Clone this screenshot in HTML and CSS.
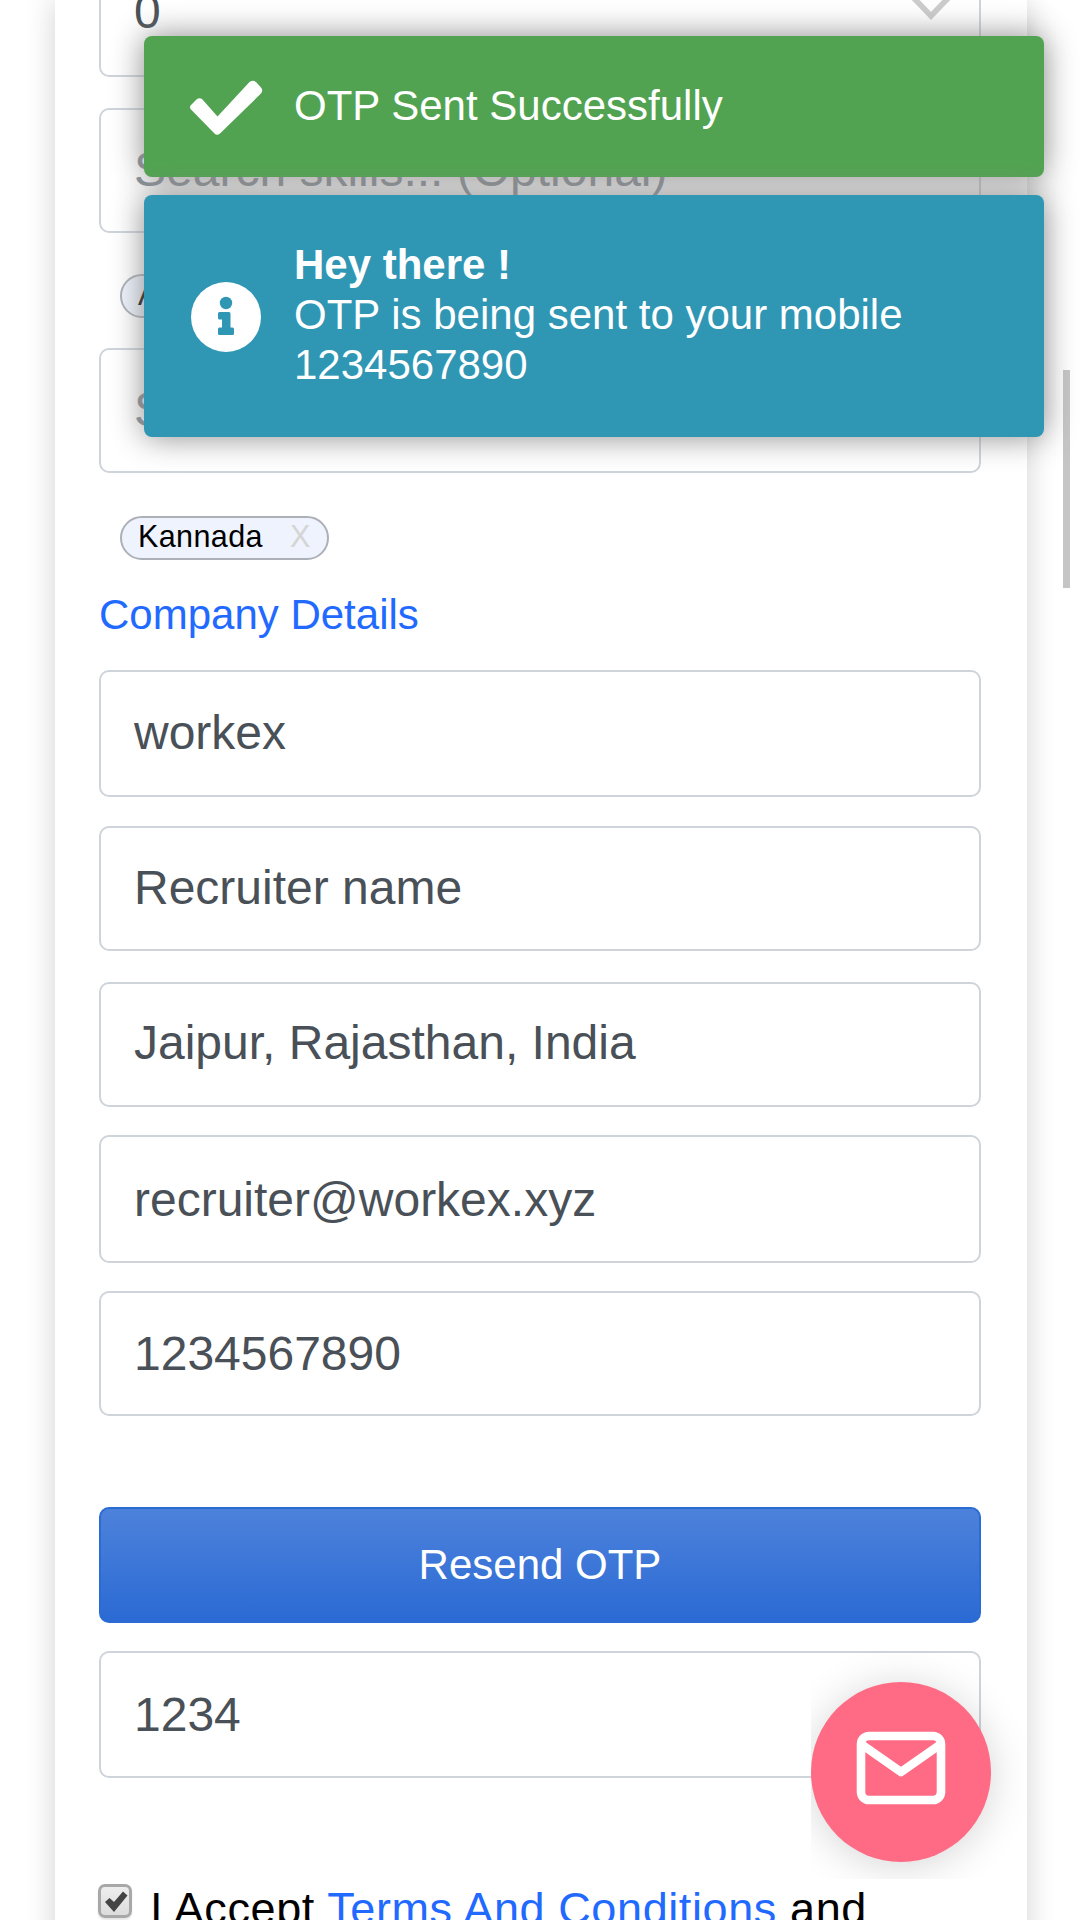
FILE: index.html
```html
<!DOCTYPE html>
<html lang="en">
<head>
<meta charset="utf-8">
<title>Post a job</title>
<link rel="stylesheet" href="styles.css">
</head>
<body>
<div class="screen">
  <main class="card">
    <div class="field field-select"><span>0</span>
      <svg class="chevron" width="60" height="32" viewBox="0 0 60 32"><path d="M8 -7 L30 16 L52 -7" fill="none" stroke="#ccc" stroke-width="5.6"/></svg>
    </div>
    <div class="field field-skills placeholder">Search skills... (Optional)</div>
    <div class="tags tags-skills"><span class="tag">A</span></div>
    <div class="field placeholder">Search languages... (Optional)</div>
    <div class="tags tags-languages"><span class="tag">Kannada<span class="tag-remove">X</span></span></div>
    <h2 class="heading">Company Details</h2>
    <div class="details">
      <div class="field field-company">workex</div>
      <div class="field field-name">Recruiter name</div>
      <div class="field field-city">Jaipur, Rajasthan, India</div>
      <div class="field field-low">recruiter@workex.xyz</div>
      <div class="field field-low">1234567890</div>
    </div>
    <div class="button">Resend OTP</div>
    <div class="field field-otp">1234</div>
    <div class="terms">
      <span class="checkbox"><svg width="24" height="24" viewBox="0 0 24 24"><path d="M1 12 L5.500 8 L10 12 L19 1.500 L23.500 5.500 L10 22 Z" fill="#444"/></svg></span>
      <span class="terms-text">I Accept <a class="link">Terms And Conditions</a> and</span>
    </div>
  </main>

  <div class="scroll-thumb"></div>

  <div class="chat-frame">
    <div class="chat">
      <svg width="96" height="96" viewBox="0 0 24 24" fill="none" stroke="#fff" stroke-width="2.15" stroke-linejoin="round"><path d="M4 4h16c1.100 0 2 .9 2 2v12c0 1.100-.9 2-2 2H4c-1.100 0-2-.9-2-2V6c0-1.100.9-2 2-2z"/><path d="M22 6l-10 7L2 6"/></svg>
    </div>
  </div>

  <div class="toasts">
    <div class="toast toast-success">
      <svg class="toast-icon" width="74" height="56" viewBox="0 0 74 56"><path d="M5.500 21.500 L7.500 19.500 Q10.500 17 13.500 19.500 L28.500 36.500 L60.500 2 Q64 -0.500 67 2 L72 7.500 Q74.500 10.500 72 13.500 L31 53.500 Q28 56 25.500 53.500 L2 29.500 Q0 27 2 25 Z" fill="#fff"/></svg>
      <div class="toast-text">OTP Sent Successfully</div>
    </div>
    <div class="toast toast-info">
      <svg class="toast-icon" width="74" height="72" viewBox="0 0 74 72"><circle cx="37" cy="36" r="35" fill="#fff"/><circle cx="37" cy="22" r="6.200" fill="#2f96b4"/><path d="M30.500 31 H40 Q41.500 31 41.500 32.500 V46.500 H43.500 Q45 46.500 45 48 V52.500 Q45 54 43.500 54 H30.500 Q29 54 29 52.500 V48 Q29 46.500 30.500 46.500 H33 V38.500 H30.500 Q29 38.500 29 37 V32.500 Q29 31 30.500 31 Z" fill="#2f96b4"/></svg>
      <div class="toast-text"><b>Hey there !</b><br>OTP is being sent to your mobile<br>1234567890</div>
    </div>
  </div>
</div>
</body>
</html>
```
FILE: styles.css
```css
* { box-sizing: border-box; }
body {
  margin: 0;
  background: #fff;
  color: #000;
  font-family: "Liberation Sans", Arial, sans-serif;
  font-size: 42px;
}
.screen {
  position: relative;
  height: 1920px;
  overflow: hidden;
}
.card {
  width: 972px;
  height: 2000px;
  margin-left: 55px;
  padding: 0 46px 0 44px;
  background: #fff;
  box-shadow: 0 0 28px rgba(0, 0, 0, .18);
}

.field {
  display: flex;
  align-items: center;
  height: 125px;
  padding: 0 33px 2px;
  border: 2px solid #ced4da;
  border-radius: 10px;
  color: #495057;
  font-size: 48px;
  white-space: nowrap;
}
.placeholder { color: #868e96; }
.field-select {
  height: 77px;
  padding-bottom: 0;
  border-top: 0;
  border-radius: 0 0 10px 10px;
  align-items: flex-start;
  justify-content: space-between;
  line-height: 56px;
}
.field-select span { margin-top: -16px; }
.chevron { margin-right: -15px; }
.field-skills { margin-top: 31px; }

.tags {
  display: flex;
  align-items: flex-start;
  padding-left: 21px;
}
.tags-skills { height: 115px; padding-top: 41px; }
.tags-languages { height: 107px; padding-top: 43px; }
.tag {
  display: flex;
  align-items: center;
  gap: 27px;
  height: 44px;
  min-width: 209px;
  padding: 0 16px 3px;
  border: 2px solid #adb0b8;
  border-radius: 22px;
  background: #eef3fd;
  font-size: 30.500px;
  letter-spacing: .4px;
}
.tag-remove { color: #d5d5d5; }

.heading {
  height: 90px;
  margin: 0;
  padding-top: 10px;
  color: #226aff;
  font-size: 42px;
  font-weight: 400;
  line-height: 50px;
}
.details {
  display: grid;
  grid-template-rows: 128px 128px 125px 128px 125px;
  row-gap: 28px;
}
.details .field { height: auto; }
.field-company { margin-bottom: 1px; }
.field-name { margin-bottom: 3px; }
.field-city { padding-bottom: 5px; }
.details .field-low { padding-bottom: 0; }

.button {
  display: flex;
  align-items: center;
  justify-content: center;
  height: 116px;
  margin-top: 91px;
  border: 2px solid #2b6bd4;
  border-radius: 10px;
  background: linear-gradient(#4d82db, #2b6ad4);
  color: #fff;
}
.field-otp {
  height: 127px;
  margin-top: 28px;
  padding-bottom: 0;
}

.terms {
  display: flex;
  gap: 18px;
  margin-top: 106px;
}
.checkbox {
  width: 34px;
  height: 34px;
  padding: 3px;
  border: 3px solid #a8a8a8;
  border-radius: 7px;
  background: linear-gradient(#eee, #dcdcdc);
  box-shadow: 0 2px 2px rgba(0, 0, 0, .1);
  margin-left: -1px;
}
.checkbox svg { display: block; }
.terms-text {
  font-size: 45px;
  line-height: 50px;
  letter-spacing: .6px;
  white-space: nowrap;
}
.link { color: #226aff; }

.scroll-thumb {
  position: absolute;
  left: 1063px;
  top: 370px;
  width: 7px;
  height: 218px;
  background: #c5c5c5;
}

/* The chat bubble's frame cuts its shadow at the left and bottom edges. */
.chat-frame {
  position: absolute;
  left: 811px;
  top: 1640px;
  width: 269px;
  height: 239px;
  padding-top: 42px;
  overflow: hidden;
}
.chat {
  display: flex;
  align-items: center;
  justify-content: center;
  width: 180px;
  height: 180px;
  padding-bottom: 9px;
  border-radius: 50%;
  background: #ff6b85;
  box-shadow: 0 4px 42px rgba(0, 0, 0, .17);
}

.toasts {
  position: absolute;
  left: 144px;
  top: 36px;
  width: 900px;
  display: flex;
  flex-direction: column;
  gap: 18px;
}
.toast {
  display: flex;
  align-items: center;
  gap: 31px;
  padding-left: 45px;
  border-radius: 8px;
  box-shadow: 0 0 31.500px #8a8a8a;
  color: #fff;
  line-height: 50px;
}
.toast-icon { margin-top: 2px; }
.toast-text { padding-bottom: 2px; }
.toast-success { height: 141px; background: #51a351; }
.toast-info { height: 242px; background: #2f96b4; }
```
